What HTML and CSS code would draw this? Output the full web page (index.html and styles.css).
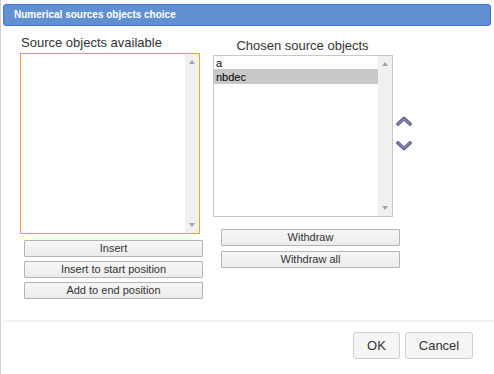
FILE: index.html
```html
<!DOCTYPE html>
<html>
<head>
<meta charset="utf-8">
<link rel="stylesheet" href="styles.css">
</head>
<body>
<div class="dialog">
  <div class="titlebar">Numerical sources objects choice</div>
  <div class="content">
    <div class="col col-left">
      <div class="label label-left">Source objects available</div>
      <div class="listbox listbox-left">
        <div class="items"></div>
        <div class="scrollbar"><span class="tri up"></span><span class="tri down"></span></div>
      </div>
      <div class="btns btns-left">
        <button class="btn">Insert</button>
        <button class="btn">Insert to start position</button>
        <button class="btn">Add to end position</button>
      </div>
    </div>
    <div class="col col-right">
      <div class="label label-right">Chosen source objects</div>
      <div class="right-row">
        <div class="listbox listbox-right">
          <div class="items">
            <div class="item">a</div>
            <div class="item selected">nbdec</div>
          </div>
          <div class="scrollbar"><span class="tri up"></span><span class="tri down"></span></div>
        </div>
        <div class="movers">
          <svg class="chev" width="16" height="10" viewBox="0 0 16 10"><polyline points="2,8 8,2.5 14,8" fill="none" stroke="#5e5e94" stroke-width="3.6" stroke-linejoin="round" stroke-linecap="round"/><polyline points="2.5,7.8 8,2.8 13.5,7.8" fill="none" stroke="#a3a3d3" stroke-width="1" stroke-linejoin="round" stroke-linecap="round"/></svg>
          <svg class="chev" width="16" height="10" viewBox="0 0 16 10"><polyline points="2,2 8,7.5 14,2" fill="none" stroke="#5e5e94" stroke-width="3.6" stroke-linejoin="round" stroke-linecap="round"/><polyline points="2.5,2.2 8,7.2 13.5,2.2" fill="none" stroke="#a3a3d3" stroke-width="1" stroke-linejoin="round" stroke-linecap="round"/></svg>
        </div>
      </div>
      <div class="btns btns-right">
        <button class="btn">Withdraw</button>
        <button class="btn">Withdraw all</button>
      </div>
    </div>
  </div>
  <div class="separator"></div>
  <div class="footer">
    <button class="dbtn ok">OK</button>
    <button class="dbtn cancel">Cancel</button>
  </div>
</div>
</body>
</html>
```

FILE: styles.css
```css
* { box-sizing: border-box; }
html, body { margin: 0; padding: 0; background: #fff; }
body { font-family: "Liberation Sans", Arial, sans-serif; color: #333; }
.dialog {
  width: 494px;
  height: 374px;
  border-left: 1px solid #d0d0d0;
  padding-top: 4px;
  overflow: hidden;
}
.titlebar {
  margin: 0 3px 0 2px;
  height: 22px;
  background: #6090d0;
  border: 1px solid #3f74d4;
  border-radius: 3px;
  color: #fff;
  font-weight: bold;
  font-size: 10px;
  line-height: 20px;
  padding-left: 10px;
}
.content {
  display: flex;
  padding-left: 19px;
  padding-top: 9px;
  height: 294px;
}
.col { display: flex; flex-direction: column; width: 180px; }
.col-right { margin-left: 13px; }
.label { font-size: 13px; line-height: 15px; }
.label-left { padding-left: 1px; margin-bottom: 3px; }
.label-right { text-align: center; margin-top: 3px; margin-bottom: 2px; padding-right: 1px; }
.listbox {
  display: flex;
  border: 1px solid #c8c8c8;
  background: #fff;
  width: 180px;
}
.listbox-left { height: 181px; border-color: #e6a63a; }
.listbox-right { height: 162px; }
.items { flex: 1; padding-top: 1px; }
.item { font-size: 11px; line-height: 12px; color: #000; padding-left: 2px; }
.item.selected { background: #c8c8c8; line-height: 14px; padding-top: 1px; }
.scrollbar {
  width: 14px;
  background: #f0f0f0;
  display: flex;
  flex-direction: column;
  justify-content: space-between;
  align-items: center;
  padding: 6px 0 6px;
}
.tri { width: 0; height: 0; border-left: 3.5px solid transparent; border-right: 3.5px solid transparent; }
.tri.up { border-bottom: 4px solid #a3a3a3; }
.tri.down { border-top: 4px solid #a3a3a3; }
.right-row { display: flex; width: 220px; }
.movers { display: flex; flex-direction: column; margin-left: 3px; padding-top: 61px; gap: 15px; }
.chev { display: block; }
.btns { display: flex; flex-direction: column; }
.btns-left { margin-top: 6px; margin-left: 4px; gap: 4px; }
.btns-right { margin-top: 12px; margin-left: 8px; gap: 5px; }
.btn {
  width: 179px;
  height: 17px;
  padding: 0;
  font-family: "Liberation Sans", Arial, sans-serif;
  font-size: 11px;
  color: #333;
  background: linear-gradient(#f6f6f6, #ececec);
  border: 1px solid #b4b4b4;
  border-radius: 1px;
  line-height: 15px;
}
.separator {
  margin-left: 2px;
  height: 2px;
  background: #f2f2f2;
}
.footer {
  display: flex;
  justify-content: flex-end;
  gap: 5px;
  padding-top: 10px;
  padding-right: 21px;
}
.dbtn {
  height: 27px;
  font-family: "Liberation Sans", Arial, sans-serif;
  font-size: 13px;
  color: #333;
  background: #f5f5f5;
  border: 1px solid #cfcfcf;
  border-radius: 3px;
  padding: 0;
}
.ok { width: 47px; }
.cancel { width: 68px; }
```
